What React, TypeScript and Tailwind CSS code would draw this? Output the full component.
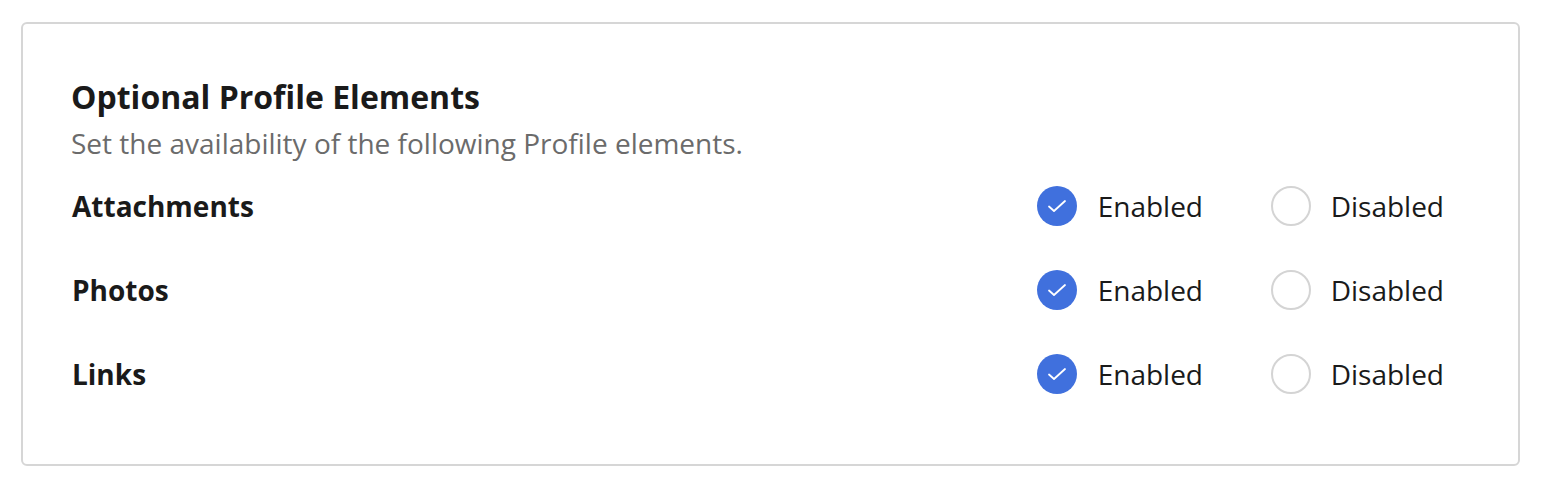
import React from "react";

const rows = ["Attachments", "Photos", "Links"];

function Check() {
  return (
    <span className="flex h-10 w-10 shrink-0 items-center justify-center rounded-full bg-[#4070dd]">
      <svg width="20" height="14" viewBox="0 0 20 14" fill="none">
        <path d="M2 7.5 L7 12 L18 2" stroke="white" strokeWidth="1.8" strokeLinecap="round" strokeLinejoin="round" />
      </svg>
    </span>
  );
}

function Empty() {
  return <span className="block h-10 w-10 shrink-0 rounded-full border-2 border-[#d4d4d4] bg-white" />;
}

export default function App() {
  return (
    <div className="min-h-[492px] bg-white pt-[22px] pl-[21px] pr-[28px]" style={{ fontFamily: '"Open Sans", sans-serif' }}>
      <div className="w-[1499px] h-[444px] rounded-[6px] border-2 border-[#d6d6d6] pl-[48px] pr-[74px] pt-[53px]">
        <h2 className="text-[32px] leading-[40px] font-bold text-[#1a1a1a]">Optional Profile Elements</h2>
        <p className="text-[28px] leading-[36px] text-[#6b6b6b] mt-[8px]">Set the availability of the following Profile elements.</p>
        <div className="mt-[25px] flex flex-col gap-[44px]">
          {rows.map((r) => (
            <div key={r} className="flex items-center h-10">
              <div className="flex-1 text-[28px] leading-[38px] font-bold text-[#1a1a1a] pl-[1px] pb-[1px]">{r}</div>
              <div className="flex items-center gap-[21px] w-[234px]">
                <Check />
                <span className="text-[28px] text-[#1a1a1a]">Enabled</span>
              </div>
              <div className="flex items-center gap-[20px]">
                <Empty />
                <span className="text-[28px] text-[#1a1a1a]">Disabled</span>
              </div>
            </div>
          ))}
        </div>
      </div>
    </div>
  );
}
